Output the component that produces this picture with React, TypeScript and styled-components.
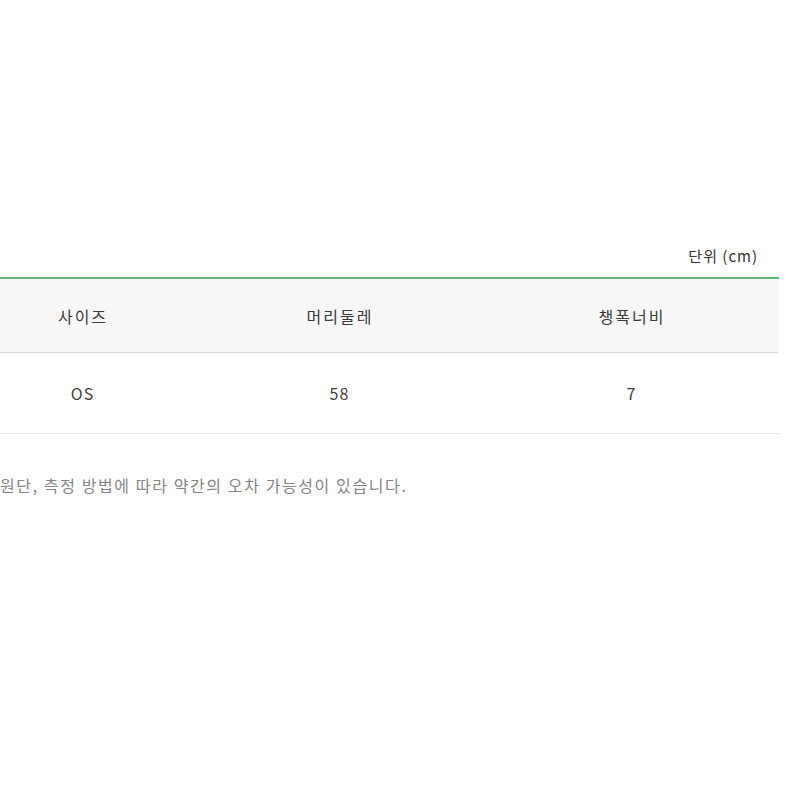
import React from "react";
import styled, { createGlobalStyle } from "styled-components";

const GlobalStyle = createGlobalStyle`
  html, body {
    margin: 0;
    padding: 0;
    background: #ffffff;
    overflow: hidden;
  }

  body {
    font-family: "Noto Sans CJK KR", "Noto Sans", sans-serif;
  }
`;

const Page = styled.div`
  width: 800px;
  height: 800px;
  overflow: hidden;
`;

const SizeSection = styled.section`
  width: 810px;
  margin-left: -31px;
  padding-top: 245px;
`;

const UnitLabel = styled.div`
  text-align: right;
  padding-right: 21px;
  font-size: 15px;
  line-height: 22px;
  letter-spacing: 1px;
  color: #333333;
  margin-bottom: 10px;
`;

const Table = styled.div`
  border-top: 2px solid #5db878;
`;

const Row = styled.div<{ $head?: boolean }>`
  display: grid;
  grid-template-columns: 226px 288px 296px;
  height: ${(p) => (p.$head ? "73px" : "80px")};
  background: ${(p) => (p.$head ? "#f7f7f7" : "#ffffff")};
  border-bottom: 1px solid ${(p) => (p.$head ? "#dcdcdc" : "#e3e3e3")};
`;

const Cell = styled.div<{ $head?: boolean }>`
  display: flex;
  align-items: center;
  justify-content: center;
  padding-left: ${(p) => (p.$head ? "2px" : "1px")};
  font-size: 16px;
  color: ${(p) => (p.$head ? "#3a3a3a" : "#404040")};
  letter-spacing: ${(p) => (p.$head ? "2px" : "1px")};
`;

const Note = styled.p`
  margin: 40px 0 0;
  padding-left: 31px;
  font-size: 16px;
  line-height: 22px;
  color: #858585;
  white-space: nowrap;
  letter-spacing: 1.6px;
`;

const headers = ["사이즈", "머리둘레", "챙폭너비"];
const values = ["OS", "58", "7"];

export default function App() {
  return (
    <Page>
      <GlobalStyle />
      <SizeSection>
        <UnitLabel>단위 (cm)</UnitLabel>
        <Table>
          <Row $head>
            {headers.map((h) => (
              <Cell key={h} $head>
                {h}
              </Cell>
            ))}
          </Row>
          <Row>
            {values.map((v) => (
              <Cell key={v}>{v}</Cell>
            ))}
          </Row>
        </Table>
        <Note>원단, 측정 방법에 따라 약간의 오차 가능성이 있습니다.</Note>
      </SizeSection>
    </Page>
  );
}
